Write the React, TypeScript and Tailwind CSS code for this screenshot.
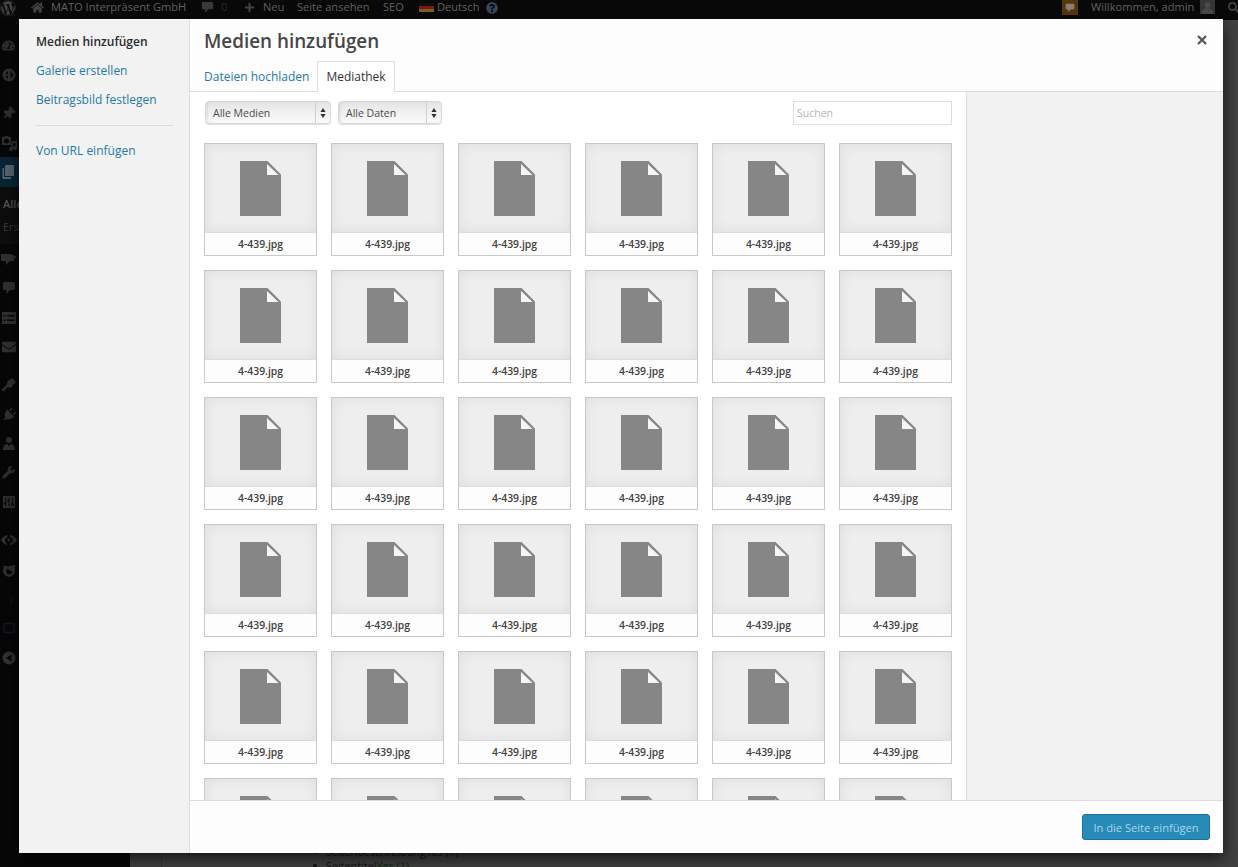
import type { ReactNode } from "react";
import {
  FaWordpress, FaHome, FaPlus, FaTachometerAlt, FaEnvelope,
  FaPlug, FaWrench, FaThumbtack, FaQuestionCircle, FaSearch,
} from "react-icons/fa";

const CommentIcon = ({ size = 14 }: { size?: number }) => (
  <svg width={size} height={size} viewBox="0 0 14 14" fill="currentColor">
    <path d="M2.500 1h9A1.500 1.500 0 0 1 13 2.500v5A1.500 1.500 0 0 1 11.500 9H8l-3.500 4V9h-2A1.500 1.500 0 0 1 1 7.500v-5A1.500 1.500 0 0 1 2.500 1z" />
  </svg>
);

const Glyph = ({ children }: { children: ReactNode }) => (
  <svg width="16" height="16" viewBox="0 0 16 16" fill="currentColor">{children}</svg>
);

const seoIcon = (
  <Glyph>
    <path fillRule="evenodd" d="M8 1.500a6.500 6.500 0 1 0 0 13 6.500 6.500 0 0 0 0-13zM7 4v3H4v2h3v3L3.500 8zM9.500 4v8l3-4z" />
  </Glyph>
);
const mediaIcon = (
  <Glyph>
    <path fillRule="evenodd" d="M1 2h2l1-1h3l1 1h2v8H1zM5.500 3.500a2.500 2.500 0 1 0 0 5 2.500 2.500 0 0 0 0-5z" />
    <path d="M10.500 6.500 16 5.500V13a2 2 0 1 1-1.500-2V8L12 8.500V14a2 2 0 1 1-1.500-2z" />
  </Glyph>
);
const pagesIcon = (
  <Glyph>
    <path d="M6 1h8v11H5V2z" />
    <path d="M2.500 4H4v9h7v2H2.500z" />
  </Glyph>
);
const megaphoneIcon = (
  <Glyph>
    <path d="M0 3h10l6 3-3 1.500V10H9l-4 4v-4H0z" />
  </Glyph>
);
const formIcon = (
  <Glyph>
    <path fillRule="evenodd" d="M1 2h14v12H1zM2.500 5v1.500h2V5zM6 5v1.500h7.500V5zM2.500 9.500V11h2V9.500zM6 9.500V11h7.500V9.500z" />
  </Glyph>
);
const brushIcon = (
  <Glyph>
    <path d="M7 4l4-3 4 4-1.500 2.500L12 7l-1 3-2 1-2-1-4.500 4.500L1 14v-1.500L5.500 8z" />
  </Glyph>
);
const userIcon = (
  <Glyph>
    <circle cx="8" cy="4" r="3" />
    <path d="M2 14c0-4 2-6 4-6l2 2 2-2c2 0 4 2 4 6z" />
  </Glyph>
);
const settingsIcon = (
  <Glyph>
    <path fillRule="evenodd" d="M2 2h12v12H2zM4.300 3.500v5H3v2h1.300v2h1v-9zM7.500 3.500v1.700H6.500v2h1v5.300h1V3.500zM11 3.500v6h-1v2h3v-2h-1v-6z" />
  </Glyph>
);
const eyeIcon = (
  <Glyph>
    <path d="M6.500 3Q2 4 0 8q2 4 6 5.500l-.5-2Q3.500 9.500 4 7.500 5 5.500 6.500 5zM9 3v2q2.500 1 3 3t-3 3.500V13q5-1.500 7-5-2-4-7-5zM7 6l2 2-1 2-1.500-2z" />
  </Glyph>
);
const swirlIcon = (
  <Glyph>
    <path fillRule="evenodd" d="M2 3.500l5 1L14 2.500v6a6 6 0 1 1-11-3zM6.500 6.500a3.200 3.200 0 1 0 5 3L9 8.500z" />
  </Glyph>
);
const squareIcon = (
  <Glyph>
    <path d="M3 3.500h10v9H3z" fill="none" stroke="#131a22" strokeWidth="1.500" />
  </Glyph>
);
const chevronIcon = (
  <Glyph>
    <path d="M9 4l3 4-3 4" fill="none" stroke="#111" strokeWidth="1.500" />
  </Glyph>
);
const collapseIcon = (
  <Glyph>
    <path fillRule="evenodd" d="M8 1.500a6.500 6.500 0 1 0 0 13 6.500 6.500 0 0 0 0-13zM10.500 4.500v7L5 8z" />
  </Glyph>
);

const menu: { icon: ReactNode; cls: string }[] = [
  { icon: <FaTachometerAlt size={13} />, cls: "mt-[11px]" },
  { icon: seoIcon, cls: "" },
  { icon: <FaThumbtack size={13} className="rotate-45" />, cls: "mt-[10px]" },
  { icon: mediaIcon, cls: "" },
];
const menuAfter: { icon: ReactNode; cls: string }[] = [
  { icon: megaphoneIcon, cls: "" },
  { icon: <CommentIcon />, cls: "" },
  { icon: formIcon, cls: "mt-px" },
  { icon: <FaEnvelope size={14} />, cls: "" },
  { icon: brushIcon, cls: "mt-[9px]" },
  { icon: <FaPlug size={14} className="rotate-45" />, cls: "mt-px" },
  { icon: userIcon, cls: "" },
  { icon: <FaWrench size={13} />, cls: "" },
  { icon: settingsIcon, cls: "" },
  { icon: eyeIcon, cls: "mt-[9px]" },
  { icon: swirlIcon, cls: "mt-px" },
  { icon: chevronIcon, cls: "" },
  { icon: squareIcon, cls: "" },
  { icon: collapseIcon, cls: "mt-px" },
];

const MenuRow = ({ icon, cls }: { icon: ReactNode; cls: string }) => (
  <div className={`flex h-[29px] w-[17px] shrink-0 items-center justify-center ${cls}`}>{icon}</div>
);

function AdminBar() {
  return (
    <div className="flex h-5 items-start bg-[#090909] text-[11.100px] leading-[14px] text-[#626262]">
      <div className="flex h-[15px] w-[31px] items-center text-[#464646]"><FaWordpress size={16} /></div>
      <div className="flex h-[15px] w-[20px] items-center text-[#444]"><FaHome size={13} /></div>
      <span className="w-[150px] whitespace-nowrap">MATO Interpräsent GmbH</span>
      <div className="flex h-[15px] w-[20px] items-center text-[#3a3a3a]"><CommentIcon size={13} /></div>
      <span className="w-[23px] text-[#2c2c2c]">0</span>
      <div className="flex h-[15px] w-[19px] items-center text-[#444]"><FaPlus size={11} /></div>
      <span className="w-[34px]">Neu</span>
      <span className="w-[86px] whitespace-nowrap">Seite ansehen</span>
      <span className="w-[36px]">SEO</span>
      <div className="mt-[3px] mr-[3px] flex h-[9px] w-[15px] flex-col">
        <div className="h-[3px] bg-[#111]" />
        <div className="h-[3px] bg-[#7c1712]" />
        <div className="h-[3px] bg-[#806318]" />
      </div>
      <span className="w-[49px]">Deutsch</span>
      <div className="flex h-[15px] items-center text-[#34495e]"><FaQuestionCircle size={12} /></div>
      <div className="ml-auto flex h-[15px] items-start">
        <div className="mr-[13px] flex h-[15px] w-[16px] items-center justify-center bg-[#58370d] text-[#8b8177]"><CommentIcon size={10} /></div>
        <span className="w-[109px] whitespace-nowrap">Willkommen, admin</span>
        <div className="mr-[13px] flex h-[14px] w-[15px] items-end justify-center bg-[#363636] text-[#4c4c4c]">
          <svg width="13" height="13" viewBox="0 0 16 16" fill="currentColor"><circle cx="8" cy="5" r="3.500" /><path d="M1 16c0-5 3-7 7-7s7 2 7 7z" /></svg>
        </div>
        <div className="flex h-[14px] w-[10px] items-center overflow-hidden text-[#444]"><FaSearch size={11} className="shrink-0" /></div>
      </div>
    </div>
  );
}

function Backdrop() {
  return (
    <div className="flex h-full flex-col">
      <AdminBar />
      <div className="flex min-h-0 flex-1">
        <div className="flex w-[130px] flex-col bg-[#070707] text-[#303030]">
          {menu.map((m, i) => <MenuRow key={i} {...m} />)}
          <div className="flex h-[30px] items-center bg-[#072536] text-[#55656e]">{pagesIcon}</div>
          <div className="flex h-[57px] flex-col gap-[7px] bg-[#0d0d0d] pt-[9px] pl-[3px] text-[11px] leading-4">
            <span className="font-semibold text-[#555]">Alle</span>
            <span className="text-[#393939]">Erst</span>
          </div>
          {menuAfter.map((m, i) => <MenuRow key={i} {...m} />)}
        </div>
        <div className="flex flex-1 flex-col justify-end bg-[#414141]">
          <ul className="ml-[31px] h-[22px] border-l border-[#353535] pt-px pl-[151px] text-[10.800px] leading-[12px] text-[#151515]">
            <li className="flex items-center gap-[9px]"><span className="size-[4px] rounded-full bg-[#111]" /><span>SeitenbeschreibungYes (1)</span></li>
            <li className="mt-[2px] flex items-center gap-[9px]"><span className="size-[4px] rounded-full bg-[#111]" /><span>Seitentitel<span className="text-[#102410]">Yes (1)</span></span></li>
          </ul>
        </div>
      </div>
    </div>
  );
}

const Select = ({ label, cls }: { label: string; cls: string }) => (
  <button className={`flex h-[23px] items-stretch rounded-[4px] border border-[#d9d9d9] bg-linear-to-b from-[#e4e4e4] via-[#f0f0f0] to-[#fafafa] text-left text-[10.500px] leading-[22px] text-[#4b4b4b] shadow-[0_1px_1px_#0002,inset_2px_0_2px_#0001] ${cls}`}>
    <span className="flex-1 pl-[7px]">{label}</span>
    <span className="flex w-[15px] items-center justify-center border-l border-[#d0d0d0]">
      <svg width="6" height="10" viewBox="0 0 6 10" fill="#303030"><path d="M3 0l2.600 4H.4zM3 10L.4 6h5.200z" /></svg>
    </span>
  </button>
);

const Thumb = () => (
  <div className="flex h-[113px] flex-col border border-[#c8c8c8] bg-[#fdfdfd]">
    <div className="flex h-[88px] justify-center bg-[#eee] pt-[17px] shadow-[inset_0_0_14px_#00000012]">
      <svg width="41" height="55" viewBox="0 0 41 55">
        <path d="M0 0H27.500L41 13.500V55H0z" fill="#868686" />
        <path d="M27 3v11h11.500z" fill="#f5f5f5" />
      </svg>
    </div>
    <div className="h-[23px] border-t border-[#dcdcdc] text-center text-[10.400px] leading-[22px] font-semibold text-[#404040]">4-439.jpg</div>
  </div>
);

function MediaModal() {
  return (
    <div className="absolute top-[19px] left-[19px] flex h-[834px] w-[1204px] bg-[#fdfdfd] text-[#222] shadow-[0_5px_15px_#000000b3]">
      <aside className="w-[170px] shrink-0 bg-[#f2f2f2] px-[17px] pt-[9px] text-[12px] leading-[29px] text-[#257aa3]">
        <div className="leading-[28px] font-semibold text-[#2b2b2b]">Medien hinzufügen</div>
        <div>Galerie erstellen</div>
        <div>Beitragsbild festlegen</div>
        <div className="mt-[11px] mb-[10px] w-[137px] border-t border-[#dcdcdc]" />
        <div>Von URL einfügen</div>
      </aside>
      <div className="flex min-w-0 flex-1 flex-col border-l border-[#dcdcdc]">
        <header className="flex h-[73px] shrink-0 flex-col border-b border-[#dedede]">
          <div className="flex h-[42px] shrink-0 items-center justify-between pr-[16px] pl-[14px]">
            <h1 className="pt-[2px] text-[18.850px] leading-[42px] font-semibold text-[#464646]">Medien hinzufügen</h1>
            <svg width="10" height="10" viewBox="0 0 10 10" stroke="#595959" strokeWidth="2.400"><path d="M1 1l8 8M9 1L1 9" /></svg>
          </div>
          <nav className="flex h-[31px] shrink-0 pl-[14px] text-[12px] leading-[29px]">
            <a className="w-[113px] pt-px whitespace-nowrap text-[#257aa3]">Dateien hochladen</a>
            <a className="w-[78px] border border-b-0 border-[#dedede] bg-white text-center whitespace-nowrap text-[#333]">Mediathek</a>
          </nav>
        </header>
        <main className="flex min-h-0 flex-1">
          <section className="flex w-[776px] flex-col overflow-hidden bg-white pl-[14px]">
            <div className="flex h-[51px] w-[748px] shrink-0 items-start pt-[9px]">
              <Select label="Alle Medien" cls="ml-px w-[126px]" />
              <Select label="Alle Daten" cls="ml-[7px] w-[104px]" />
              <input placeholder="Suchen" className="ml-auto h-[24px] w-[159px] border border-[#dedede] px-[3px] text-[10.500px] placeholder:text-[#b4b4b4]" />
            </div>
            <div className="grid w-[748px] grid-cols-6 gap-x-[13.900px] gap-y-[14px]">
              {Array.from({ length: 36 }, (_, i) => <Thumb key={i} />)}
            </div>
          </section>
          <aside className="flex-1 border-l border-[#dfdfdf] bg-[#f2f2f2]" />
        </main>
        <footer className="flex h-[53px] shrink-0 items-center justify-end border-t border-[#dedede] pr-[13px]">
          <button className="h-[26px] w-[128px] rounded-[3px] border border-[#1c709a] bg-[#278ab7] text-[11.100px] leading-[25px] whitespace-nowrap text-[#a9d6ea]">In die Seite einfügen</button>
        </footer>
      </div>
    </div>
  );
}

export default function App() {
  return (
    <div className="relative h-[867px] w-[1238px] overflow-hidden bg-[#414141] font-['Open_Sans',sans-serif]">
      <Backdrop />
      <MediaModal />
    </div>
  );
}
